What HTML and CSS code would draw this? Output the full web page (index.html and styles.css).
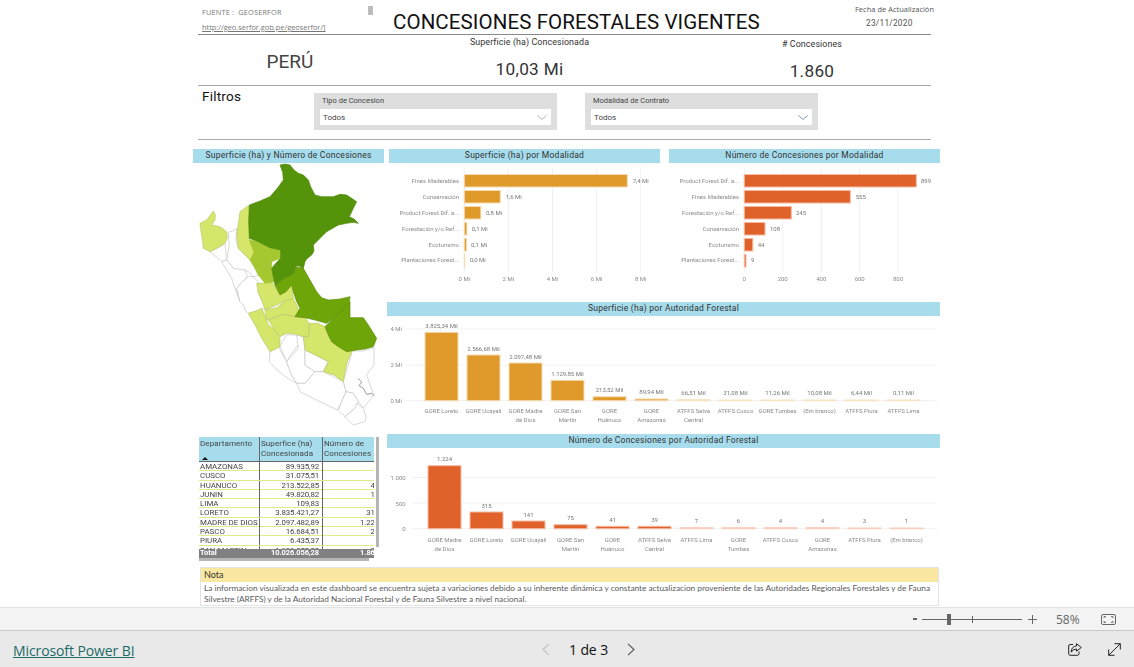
FILE: index.html
```html
<!DOCTYPE html>
<html lang="es">
<head>
<meta charset="utf-8">
<title>Concesiones Forestales Vigentes</title>
<link rel="stylesheet" href="styles.css">
</head>
<body>
<div class="shell">
  <main class="canvas">
    <div class="report">
      <header class="head">
        <div class="source">
          <div class="src-line">FUENTE :&nbsp; GEOSERFOR</div>
          <a class="src-link">http://geo.serfor.gob.pe/geoserfor/]</a>
        </div>
        <div class="mini-scroll"></div>
        <h1 class="title">CONCESIONES FORESTALES VIGENTES</h1>
        <div class="updated">
          <div class="upd-label">Fecha de Actualización</div>
          <div class="upd-date">23/11/2020</div>
        </div>
      </header>

      <section class="kpis">
        <div class="kpi-country">PERÚ</div>
        <div class="kpi kpi-area">
          <div class="kpi-label">Superficie (ha) Concesionada</div>
          <div class="kpi-value">10,03 Mi</div>
        </div>
        <div class="kpi kpi-count">
          <div class="kpi-label">#&nbsp;Concesiones</div>
          <div class="kpi-value">1.860</div>
        </div>
      </section>

      <section class="filters">
        <div class="filters-title">Filtros</div>
        <div class="slicer slicer-a">
          <div class="slicer-label">Tipo de Concesion</div>
          <div class="slicer-box"><span>Todos</span>
            <svg class="chev" viewBox="0 0 10 5"><path d="M.5.5 5 4.5 9.5.5"/></svg></div>
        </div>
        <div class="slicer slicer-b">
          <div class="slicer-label">Modalidad de Contrato</div>
          <div class="slicer-box"><span>Todos</span>
            <svg class="chev chev-blue" viewBox="0 0 10 5"><path d="M.5.5 5 4.5 9.5.5"/></svg></div>
        </div>
      </section>

      <section class="dash">
        <div class="left-col">
          <h2 class="vh">Superficie (ha) y Número de Concesiones</h2>
          <svg class="map" viewBox="9 54 573 801">
            <g class="dep w">
              <path d="M115 262 128 258 140 250 138 285 145 310 165 330 180 345 195 370 205 392 190 395 178 382 165 375 148 380 130 370 118 355 110 345 118 300Z"/>
              <path d="M60 320 85 308 105 295 110 345 95 350 78 335Z"/>
              <path d="M95 350 110 345 130 370 165 375 172 395 155 412 140 430 145 450 150 470 135 430 125 400 108 372Z"/>
              <path d="M140 430 155 412 175 395 190 395 205 412 205 445 215 465 225 490 198 498 175 505 165 495 160 480 150 470Z"/>
              <path d="M240 620 265 605 278 630 290 650 298 672 305 690 320 715 300 705 280 690 258 672 238 650Z"/>
              <path d="M270 605 280 585 290 570 320 570 325 585 325 600 305 625 290 650Z"/>
              <path d="M320 570 340 575 345 615 345 660 375 680 358 700 345 715 320 715 305 690 300 680 290 650 325 610Z"/>
              <path d="M345 615 380 632 415 650 405 668 400 680 375 680 345 660Z"/>
              <path d="M320 715 345 715 375 680 400 680 430 695 460 710 468 740 455 770 442 795 390 770 330 740Z"/>
              <path d="M487 618 520 618 552 608 552 660 540 675 530 690 540 720 552 750 535 770 520 790 505 770 490 745 468 740 460 710 475 660Z"/>
              <path d="M468 740 490 745 505 770 495 790 465 815 445 795 455 770Z"/>
              <path d="M500 775 520 790 528 815 525 830 490 840 465 815 495 790Z"/>
            </g>
            <path class="lake" d="M505 700 515 712 507 722 520 730 530 748 545 745 552 752"/>
            <g class="dep l">
              <path d="M150 200 175 182 180 205 185 225 180 255 178 285 190 305 200 320 180 345 165 330 145 310 140 270 145 235Z"/>
              <path d="M30 235 50 225 70 198 76 210 75 225 65 240 90 245 110 260 112 280 105 295 80 310 60 320 40 310 38 290 34 265Z"/>
              <path d="M200 415 225 415 245 410 255 425 270 450 288 440 305 420 308 440 310 460 285 468 260 480 225 495 215 465 205 445Z"/>
              <path d="M225 495 260 488 285 468 310 460 320 480 328 500 315 515 280 508 245 520 230 525Z"/>
              <path d="M235 525 280 508 315 515 345 518 358 535 355 575 340 575 320 568 290 565 270 575 252 552Z"/>
              <path d="M175 505 198 498 215 490 225 512 235 540 252 552 270 580 270 605 240 620 228 600 215 580 195 540Z"/>
              <path d="M360 535 385 535 405 545 425 590 455 612 487 618 472 650 465 680 460 710 432 690 400 680 415 650 380 632 345 615 340 575 355 575Z"/>
            </g>
            <path class="dep m" d="M178 285 205 290 240 308 272 315 272 340 245 350 245 370 250 395 255 410 225 415 205 390 195 370 180 345 192 322Z"/>
            <g class="dep g">
              <path d="M315 365 340 370 360 405 380 440 395 458 415 465 450 462 480 455 478 470 475 490 440 512 410 535 375 525 345 518 315 515 330 490 320 470 310 440 305 420 288 440 270 450 255 420 285 398 310 385Z"/>
              <path d="M480 470 480 518 520 518 535 540 560 580 550 605 525 612 500 615 470 620 445 605 425 590 415 570 405 545 425 525 440 510Z"/>
            </g>
            <path class="dep d" d="M270 60 285 57 300 60 312 75 325 85 340 90 355 105 362 125 375 150 395 155 430 155 450 148 470 150 485 160 500 170 490 190 478 215 492 222 505 235 490 232 470 235 445 240 410 260 390 280 370 300 372 318 365 330 350 342 345 350 340 370 325 362 315 365 310 385 285 398 255 420 250 395 245 370 260 352 272 340 272 315 240 308 205 290 178 280 176 230 178 180 210 168 240 155 262 130 280 105 278 82Z"/>
          </svg>
          <div class="table-zone">
            <div class="table-main">
              <div class="tclip">
                <div class="trow thead">
                  <div class="th">Departamento<span class="sort"></span></div>
                  <div class="th">Superfice (ha) Concesionada</div>
                  <div class="th">Número de Concesiones</div>
                </div>
                <div class="tbody">
                  <div class="trow"><span>AMAZONAS</span><span class="n">89.935,92</span><span class="n">4</span></div>
                  <div class="trow"><span>CUSCO</span><span class="n">31.075,51</span><span class="n">4</span></div>
                  <div class="trow"><span>HUANUCO</span><span class="n">213.522,85</span><span class="n">41</span></div>
                  <div class="trow"><span>JUNIN</span><span class="n">49.820,82</span><span class="n">10</span></div>
                  <div class="trow"><span>LIMA</span><span class="n">109,83</span><span class="n">7</span></div>
                  <div class="trow"><span>LORETO</span><span class="n">3.835.421,27</span><span class="n">315</span></div>
                  <div class="trow"><span>MADRE DE DIOS</span><span class="n">2.097.482,89</span><span class="n">1.224</span></div>
                  <div class="trow"><span>PASCO</span><span class="n">16.684,51</span><span class="n">21</span></div>
                  <div class="trow"><span>PIURA</span><span class="n">6.435,37</span><span class="n">3</span></div>
                  <div class="trow"><span>SAN MARTIN</span><span class="n">1.129.850,00</span><span class="n">75</span></div>
                </div>
                <div class="trow ttotal"><span>Total</span><span class="n">10.026.056,28</span><span class="n">1.860</span></div>
              </div>
              <div class="vscroll"></div>
            </div>
            <div class="hscroll"></div>
          </div>
        </div>

        <div class="right-col">
          <div class="top-pair">
            <div class="panel">
              <h2 class="vh">Superficie (ha) por Modalidad</h2>
              <svg class="chart ch-a" viewBox="389 163 271 134">
                <g class="grid"><path d="M464.3 168V272M508.4 168V272M552.5 168V272M596.6 168V272M640.7 168V272"/></g>
                <g class="or">
                  <rect x="464.3" y="174.5" width="163" height="12.5"/>
                  <rect x="464.3" y="190.5" width="36" height="12.5"/>
                  <rect x="464.3" y="206.5" width="16.5" height="12.5"/>
                  <rect x="464.3" y="222.5" width="2.6" height="12.5"/>
                  <rect x="464.3" y="238.5" width="2.2" height="12.5"/>
                  <rect x="464.3" y="254.5" width=".5" height="12.5"/>
                </g>
                <g class="cat-r">
                  <text x="459" y="183">Fines Maderables</text>
                  <text x="459" y="199">Conservación</text>
                  <text x="459" y="215">Product.Forest.Dif. a...</text>
                  <text x="459" y="231">Forestación y/o Ref...</text>
                  <text x="459" y="247">Ecoturismo</text>
                  <text x="459" y="262">Plantaciones Forest...</text>
                </g>
                <g class="val">
                  <text x="632.7" y="183">7,4 Mi</text>
                  <text x="505.7" y="199">1,6 Mi</text>
                  <text x="486" y="215">0,8 Mi</text>
                  <text x="471.7" y="231">0,1 Mi</text>
                  <text x="471" y="247">0,1 Mi</text>
                  <text x="469.7" y="262">0,0 Mi</text>
                </g>
                <g class="axis">
                  <text x="464.3" y="281">0 Mi</text>
                  <text x="508.4" y="281">2 Mi</text>
                  <text x="552.5" y="281">4 Mi</text>
                  <text x="596.6" y="281">6 Mi</text>
                  <text x="640.7" y="281">8 Mi</text>
                </g>
              </svg>
            </div>
            <div class="panel">
              <h2 class="vh">Número de Concesiones por Modalidad</h2>
              <svg class="chart ch-b" viewBox="669 163 271 134">
                <g class="grid"><path d="M744.3 168V272M782.7 168V272M821.3 168V272M859.7 168V272M898 168V272"/></g>
                <g class="rd">
                  <rect x="744.3" y="174.5" width="172" height="12.5"/>
                  <rect x="744.3" y="190.5" width="106" height="12.5"/>
                  <rect x="744.3" y="206.5" width="47" height="12.5"/>
                  <rect x="744.3" y="222.5" width="20.7" height="12.5"/>
                  <rect x="744.3" y="238.5" width="8.5" height="12.5"/>
                  <rect x="744.3" y="254.5" width="1.7" height="12.5"/>
                </g>
                <g class="cat-r">
                  <text x="739" y="183">Product.Forest.Dif. a...</text>
                  <text x="739" y="199">Fines Maderables</text>
                  <text x="739" y="215">Forestación y/o Ref...</text>
                  <text x="739" y="231">Conservación</text>
                  <text x="739" y="247">Ecoturismo</text>
                  <text x="739" y="262">Plantaciones Forest...</text>
                </g>
                <g class="val">
                  <text x="921" y="183">899</text>
                  <text x="855.7" y="199">555</text>
                  <text x="796" y="215">245</text>
                  <text x="770" y="231">108</text>
                  <text x="757.7" y="247">44</text>
                  <text x="751" y="262">9</text>
                </g>
                <g class="axis">
                  <text x="744.3" y="281">0</text>
                  <text x="782.7" y="281">200</text>
                  <text x="821.3" y="281">400</text>
                  <text x="859.7" y="281">600</text>
                  <text x="898" y="281">800</text>
                </g>
              </svg>
            </div>
          </div>

          <div class="panel wide">
            <h2 class="vh">Superficie (ha) por Autoridad Forestal</h2>
            <svg class="chart ch-c" viewBox="387 316 553 113">
              <g class="grid"><path d="M406 329H937M406 365H937M406 400.7H937"/></g>
              <g class="or">
                <rect x="425" y="332.3" width="33" height="68.4"/>
                <rect x="467" y="355" width="33" height="45.7"/>
                <rect x="509" y="363" width="33" height="37.7"/>
                <rect x="551" y="380.3" width="33" height="20.4"/>
                <rect x="593" y="396.7" width="33" height="4"/>
                <rect x="635" y="399" width="33" height="1.7"/>
              </g>
              <g class="or-thin">
                <rect x="677" y="399.7" width="33" height="1"/>
                <rect x="719" y="400" width="33" height=".7"/>
                <rect x="761" y="400" width="33" height=".7"/>
                <rect x="803" y="400" width="33" height=".7"/>
                <rect x="845" y="400" width="33" height=".7"/>
                <rect x="887" y="400" width="33" height=".7"/>
              </g>
              <g class="axis-r">
                <text x="402" y="331">4 Mi</text>
                <text x="402" y="367">2 Mi</text>
                <text x="402" y="403">0 Mi</text>
              </g>
              <g class="val-c">
                <text x="441.5" y="328">3.825,34 Mil</text>
                <text x="483.5" y="351">2.566,68 Mil</text>
                <text x="525.5" y="359">2.097,48 Mil</text>
                <text x="567.5" y="376">1.129,85 Mil</text>
                <text x="609.5" y="392">213,52 Mil</text>
                <text x="651.5" y="394">89,94 Mil</text>
                <text x="693.5" y="395">66,51 Mil</text>
                <text x="735.5" y="395">31,08 Mil</text>
                <text x="777.5" y="395">11,26 Mil</text>
                <text x="819.5" y="395">10,08 Mil</text>
                <text x="861.5" y="395">6,44 Mil</text>
                <text x="903.5" y="395">0,11 Mil</text>
              </g>
              <g class="cat-c">
                <text x="441.5" y="413">GORE Loreto</text>
                <text x="483.5" y="413">GORE Ucayali</text>
                <text x="525.5" y="413">GORE Madre</text><text x="525.5" y="422">de Dios</text>
                <text x="567.5" y="413">GORE San</text><text x="567.5" y="422">Martín</text>
                <text x="609.5" y="413">GORE</text><text x="609.5" y="422">Huánuco</text>
                <text x="651.5" y="413">GORE</text><text x="651.5" y="422">Amazonas</text>
                <text x="693.5" y="413">ATFFS Selva</text><text x="693.5" y="422">Central</text>
                <text x="735.5" y="413">ATFFS Cusco</text>
                <text x="777.5" y="413">GORE Tumbes</text>
                <text x="819.5" y="413">(Em branco)</text>
                <text x="861.5" y="413">ATFFS Piura</text>
                <text x="903.5" y="413">ATFFS Lima</text>
              </g>
            </svg>
          </div>

          <div class="panel wide">
            <h2 class="vh">Número de Concesiones por Autoridad Forestal</h2>
            <svg class="chart ch-d" viewBox="387 448 553 110">
              <g class="grid"><path d="M412 477.7H937M412 503H937M412 528.7H937"/></g>
              <g class="rd">
                <rect x="428" y="465.7" width="33" height="63"/>
                <rect x="470" y="512" width="33" height="16.7"/>
                <rect x="512" y="521" width="33" height="7.7"/>
                <rect x="554" y="524.7" width="33" height="4"/>
                <rect x="596" y="526.3" width="33" height="2.4"/>
                <rect x="638" y="526.3" width="33" height="2.4"/>
              </g>
              <g class="rd-thin">
                <rect x="680" y="527.7" width="33" height="1"/>
                <rect x="722" y="527.7" width="33" height="1"/>
                <rect x="764" y="527.7" width="33" height="1"/>
                <rect x="806" y="527.7" width="33" height="1"/>
                <rect x="848" y="528" width="33" height=".7"/>
                <rect x="890" y="528" width="33" height=".7"/>
              </g>
              <g class="axis-r">
                <text x="405.7" y="480">1.000</text>
                <text x="405.7" y="505.5">500</text>
                <text x="405.7" y="531">0</text>
              </g>
              <g class="val-c">
                <text x="444.5" y="461">1.224</text>
                <text x="486.5" y="508">315</text>
                <text x="528.5" y="517">141</text>
                <text x="570.5" y="520">75</text>
                <text x="612.5" y="522">41</text>
                <text x="654.5" y="522">39</text>
                <text x="696.5" y="523">7</text>
                <text x="738.5" y="523">6</text>
                <text x="780.5" y="523">4</text>
                <text x="822.5" y="523">4</text>
                <text x="864.5" y="523">3</text>
                <text x="906.5" y="523">1</text>
              </g>
              <g class="cat-c">
                <text x="444.5" y="542">GORE Madre</text><text x="444.5" y="551">de Dios</text>
                <text x="486.5" y="542">GORE Loreto</text>
                <text x="528.5" y="542">GORE Ucayali</text>
                <text x="570.5" y="542">GORE San</text><text x="570.5" y="551">Martín</text>
                <text x="612.5" y="542">GORE</text><text x="612.5" y="551">Huánuco</text>
                <text x="654.5" y="542">ATFFS Selva</text><text x="654.5" y="551">Central</text>
                <text x="696.5" y="542">ATFFS Lima</text>
                <text x="738.5" y="542">GORE</text><text x="738.5" y="551">Tumbes</text>
                <text x="780.5" y="542">ATFFS Cusco</text>
                <text x="822.5" y="542">GORE</text><text x="822.5" y="551">Amazonas</text>
                <text x="864.5" y="542">ATFFS Piura</text>
                <text x="906.5" y="542">(Em branco)</text>
              </g>
            </svg>
          </div>
        </div>
      </section>

      <section class="nota">
        <div class="nota-head">Nota</div>
        <p class="nota-text">La informacion visualizada en este dashboard se encuentra sujeta a variaciones debido a su inherente dinámica y constante actualizacion proveniente de las Autoridades Regionales Forestales y de Fauna Silvestre (ARFFS) y de la Autoridad Nacional Forestal y de Fauna Silvestre a nivel nacional.</p>
      </section>
    </div>
  </main>

  <div class="zoombar">
    <span class="z-minus"></span>
    <div class="z-track"><span class="z-tick"></span><span class="z-thumb"></span></div>
    <svg class="z-plus" viewBox="0 0 9 9"><path d="M0 4.5H9M4.5 0V9"/></svg>
    <span class="z-pct">58%</span>
    <svg class="z-fit" viewBox="0 0 15 11"><rect x=".5" y=".5" width="14" height="10" rx="1.5"/><path d="M3 4V2.7H5M10 2.7H12V4M12 7V8.3H10M5 8.3H3V7"/></svg>
  </div>

  <footer class="footer">
    <a class="pbi">Microsoft Power BI</a>
    <nav class="pager">
      <svg class="pg-arrow pg-off" viewBox="0 0 8 13"><path d="M7 .8 1 6.5 7 12.2"/></svg>
      <span class="pg-text">1 de 3</span>
      <svg class="pg-arrow" viewBox="0 0 8 13"><path d="M1 .8 7 6.5 1 12.2"/></svg>
    </nav>
    <div class="foot-icons">
      <svg class="fi-share" viewBox="0 0 14 13"><path d="M5 1.5H2.2Q.7 1.5.7 3V10.7Q.7 12.3 2.2 12.3H9.3Q11 12.3 11 10.7V8.5"/><path d="M8.5.7 13.3 4.5 8.5 8.2V6Q4.7 6 3.2 9.2 3.4 3.3 8.5 3Z"/></svg>
      <svg class="fi-expand" viewBox="0 0 13 13"><path d="M.7 12.3 12.3.7M6.5.7H12.3V6.5M.7 6.5V12.3H6.5"/></svg>
    </div>
  </footer>
</div>
</body>
</html>
```
FILE: styles.css
```css
* { box-sizing: border-box; }
html, body { margin: 0; padding: 0; }
body { width: 1134px; height: 667px; overflow: hidden; background: #fff; font-family: Roboto, "Liberation Sans", sans-serif; color: #333; }
h1, h2, p { margin: 0; font-weight: 400; }

.shell { display: flex; flex-direction: column; height: 667px; }
.canvas { height: 607px; flex: none; padding-left: 193px; background: #fff; overflow: hidden; }
.report { width: 747px; display: flex; flex-direction: column; }

.head, .kpis, .filters { margin: 0 9px 0 5px; flex: none; }
.head { height: 35px; display: flex; border-bottom: 1.5px solid #8a8a8a; }
.source { width: 170px; flex: none; padding: 7px 0 0 4px; font-family: "Open Sans", sans-serif; font-size: 7.4px; color: #777; }
.src-line { height: 15px; letter-spacing: .15px; }
.src-link { display: block; text-decoration: underline; white-space: nowrap; }
.mini-scroll { width: 5px; height: 9px; margin-top: 6px; background: #bdbdbd; flex: none; }
.title { margin: 10px 0 0 20px; width: 375px; flex: none; font-size: 20.5px; line-height: 24px; color: #111; white-space: nowrap; letter-spacing: .1px; }
.updated { margin-left: 87px; flex: none; font-family: "Open Sans", sans-serif; font-size: 7.5px; color: #555; }
.upd-label { padding-top: 4px; line-height: 10px; white-space: nowrap; }
.upd-date { padding: 4px 0 0 11px; font-family: Roboto, sans-serif; font-size: 8.4px; line-height: 10px; letter-spacing: .2px; }

.kpis { height: 51px; display: flex; border-bottom: 1.5px solid #a8a8a8; text-align: center; color: #333; }
.kpi-country { width: 184px; padding: 16px 0 0 0; font-size: 19px; line-height: 22px; color: #444; }
.kpi { display: flex; flex-direction: column; align-items: center; }
.kpi-area { width: 155px; margin-left: 70px; padding-top: 1px; }
.kpi-count { width: 100px; margin-left: 155px; padding-top: 3px; }
.kpi-label { font-size: 8.9px; line-height: 12px; white-space: nowrap; letter-spacing: .1px; }
.kpi-value { margin-top: 11px; font-size: 17.2px; line-height: 20px; letter-spacing: .3px; }

.filters { height: 54px; display: flex; padding-top: 2px; border-bottom: 1.5px solid #a8a8a8; }
.filters-title { width: 116px; padding-left: 4px; font-size: 13.6px; line-height: 16px; color: #111; letter-spacing: .2px; }
.slicer { height: 37px; margin-top: 5px; padding: 3px 6px 0; background: #dedede; }
.slicer-a { width: 243px; }
.slicer-b { width: 233px; margin-left: 28px; }
.slicer-label { font-size: 7.5px; line-height: 10px; color: #444; margin-bottom: 3px; padding-left: 2px; }
.slicer-box { height: 16px; display: flex; align-items: center; justify-content: space-between; padding: 0 4px 0 3px; background: #fff; font-size: 8px; color: #444; }
.chev { width: 10px; height: 5px; fill: none; stroke: #a0a0a0; stroke-width: .8; }
.chev-blue { stroke: #5c78b4; }

.dash { height: 418px; margin-top: 9px; display: flex; flex: none; }
.left-col { width: 194px; flex: none; }
.right-col { width: 553px; flex: none; display: flex; flex-direction: column; }
.vh { height: 14px; background: #a6dcec; font-size: 8.5px; line-height: 13px; text-align: center; color: #333; letter-spacing: .25px; white-space: nowrap; }
.left-col .vh { width: 191px; }

.map { display: block; width: 191px; height: 267px; filter: blur(.35px); }
.dep path, path.dep { stroke-width: 2; stroke-linejoin: round; }
.w path { fill: #fff; stroke: #c4c4c4; }
.l path { fill: #d6e66b; stroke: #b9c66a; }
path.m { fill: #a5c72f; stroke: #a5c72f; }
.g path { fill: #6ea508; stroke: #5d8c0a; }
path.d { fill: #55940a; stroke: #4f8a0a; }
.lake { fill: none; stroke: #666; stroke-width: 2; }

.table-zone { margin: 7px 0 0 6px; }
.table-main { display: flex; }
.tclip { width: 175px; height: 121px; overflow: hidden; filter: blur(.2px); }
.trow { width: 183px; display: grid; grid-template-columns: 60px 63px 60px; font-size: 7.9px; line-height: 9px; color: #444; }
.tbody { height: 87px; overflow: hidden; }
.tbody .trow { height: 9.3px; border-bottom: .7px solid #e2e98c; }
.tbody .trow > span { padding: 0 1px; white-space: nowrap; }
.tbody .trow > span + span { border-left: 1px solid #666; }
.thead { height: 25px; background: #a6dcec; border-bottom: 1px solid #666; }
.th { padding: 2px 2px 0 1px; font-size: 8px; line-height: 9.5px; color: #444; position: relative; letter-spacing: .1px; }
.th + .th { border-left: 1px solid #666; }
.sort { position: absolute; left: 3px; top: 20px; width: 0; height: 0; border: 3px solid transparent; border-top: 0; border-bottom: 3px solid #111; }
.tbody .trow > .n { text-align: right; padding-right: 3px; letter-spacing: -.15px; }
.ttotal { height: 8.6px; background: #808080; color: #fff; font-weight: 700; font-size: 7.5px; line-height: 8.6px; }
.ttotal > span { padding: 0 1px; white-space: nowrap; }
.ttotal > .n { text-align: right; padding-right: 3px; letter-spacing: -.1px; }
.vscroll { width: 3px; height: 110px; margin-left: 2px; background: #b6b6b6; }
.hscroll { width: 170px; height: 3px; margin-top: -.5px; background: #b6b6b6; }

.top-pair { display: flex; gap: 9px; padding-left: 2px; }
.panel { width: 271px; height: 148px; flex: none; }
.panel.wide { width: 553px; height: 127px; margin-top: 5px; }
.panel.wide + .panel.wide { height: 124px; }
.chart { display: block; width: 100%; filter: blur(.3px); }
.ch-a, .ch-b { height: 134px; }
.ch-c { height: 113px; }
.ch-d { height: 110px; }
.chart text { font-size: 6px; fill: #8a8a8a; }
.grid path { stroke: #f1f1f1; stroke-width: 1; fill: none; }
.or rect { fill: #e09a2b; stroke: #f5dcb2; stroke-width: 1; }
.or-thin rect { fill: #f3c98a; stroke: #f7e3c4; stroke-width: 1; }
.rd rect { fill: #e0622a; stroke: #f6bba1; stroke-width: 1; }
.rd-thin rect { fill: #f3a789; stroke: #f8cfbd; stroke-width: 1; }
.cat-r text, .axis-r text { text-anchor: end; }
.axis text, .val-c text, .cat-c text { text-anchor: middle; }
.val text, .val-c text { fill: #777; }

.nota { width: 739px; height: 39px; margin-left: 7px; flex: none; border: 1.5px solid #e3e3e3; border-top-width: 1px; font-family: Lato, "Open Sans", sans-serif; }
.nota-head { height: 14px; padding-left: 3px; background: #fae7a0; font-size: 9px; line-height: 13px; color: #333; }
.nota-text { padding: 0 2px 0 3px; font-size: 8.28px; line-height: 11px; margin-top: 1px; color: #5a5a5a; }

.zoombar { height: 24px; flex: none; display: flex; align-items: center; background: #f3f3f3; border-top: 1px solid #e2e2e2; border-bottom: 1.5px solid #c8c8c8; padding-left: 913px; }
.z-minus { width: 4px; height: 2px; background: #666; }
.z-track { width: 100px; height: 1px; margin-left: 5px; background: #666; position: relative; }
.z-thumb { position: absolute; left: 25px; top: -5px; width: 4px; height: 11px; background: #666; }
.z-tick { position: absolute; left: 50px; top: -3px; width: 1px; height: 7px; background: #666; }
.z-plus { width: 9px; height: 9px; margin-left: 6px; stroke: #666; stroke-width: 1; fill: none; }
.z-pct { width: 23px; margin-left: 19px; font-family: "Open Sans", sans-serif; font-size: 12px; color: #666; }
.z-fit { width: 15px; height: 11px; margin-left: 22px; fill: none; stroke: #666; stroke-width: 1; }

.footer { flex: 1; display: flex; align-items: center; background: #e9e9e9; font-family: "Open Sans", sans-serif; }
.pbi { width: 530px; flex: none; padding: 3px 0 0 13px; font-size: 14px; color: #1c6b68; text-decoration: underline; white-space: nowrap; letter-spacing: -.1px; }
.pager { width: 93px; flex: none; margin-left: 12px; display: flex; align-items: center; justify-content: space-between; }
.pg-arrow { width: 8px; height: 13px; fill: none; stroke: #555; stroke-width: 1.1; }
.pg-off { stroke: #c0c0c0; }
.pg-text { font-size: 14px; color: #111; letter-spacing: -.1px; }
.foot-icons { margin-left: 433px; display: flex; align-items: center; gap: 26px; }
.fi-share { width: 14px; height: 13px; fill: none; stroke: #222; stroke-width: 1; }
.fi-expand { width: 13px; height: 13px; fill: none; stroke: #222; stroke-width: 1; }
```
